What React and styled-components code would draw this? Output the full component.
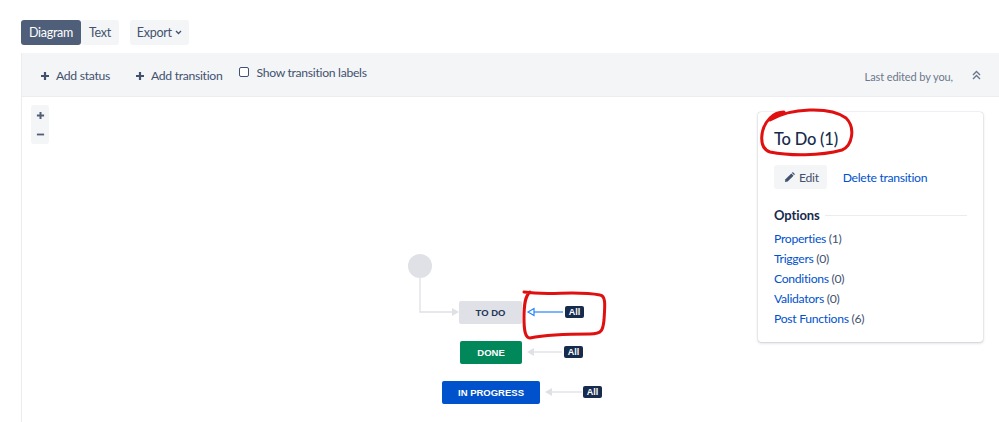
import React from "react";
import styled, {createGlobalStyle} from "styled-components";

const TEXT = "#172b4d";
const SUBTLE = "#42526e";
const LINK = "#0052cc";
const N20 = "#f4f5f7";
const N40 = "#dfe1e6";

const GlobalStyle = createGlobalStyle`
  html, body {
    margin: 0;
    padding: 0;
    background: #fff;
    font-family: Lato, "Noto Sans", sans-serif;
    color: ${TEXT};
    letter-spacing: -0.3px;
  }
  * { box-sizing: border-box; }
`;

const Page = styled.div`
  position: relative;
  width: 999px;
  height: 422px;
  overflow: hidden;
  padding: 20px 0 0 21px;
`;

const Tabs = styled.div`
  display: flex;
  align-items: center;
  height: 25px;
`;

const Tab = styled.div`
  height: 25px;
  padding: 0 ${p => (p.$menu ? 7 : 8)}px;
  display: flex;
  align-items: center;
  gap: 3px;
  font-size: 12.5px;
  letter-spacing: -0.3px;
  border-radius: 3px;
  margin-left: ${p => p.$gap || 0}px;
  background: ${p => (p.$active ? "#505f79" : N20)};
  color: ${p => (p.$active ? "#fff" : SUBTLE)};
`;

const Workspace = styled.div`
  margin-top: 8px;
  border-left: 1px solid #ebecf0;
`;

const Toolbar = styled.div`
  height: 44px;
  background: ${N20};
  border-bottom: 1px solid #ebecf0;
  display: flex;
  align-items: center;
  padding: 0 18px 0 18px;
  font-size: 12.2px;
  color: ${SUBTLE};
`;

const ToolButton = styled.div`
  display: flex;
  align-items: center;
  gap: 6px;
  margin-right: ${p => p.$mr || 0}px;
  padding-top: 2px;
`;

const CheckLabel = styled.label`
  display: flex;
  align-items: center;
  gap: 7px;
  margin-top: -5px;
`;

const Box = styled.span`
  width: 10px;
  height: 10px;
  border: 1px solid #42526e;
  border-radius: 2px;
  background: #fff;
`;

const Spacer = styled.div`
  flex: 1;
`;

const LastEdited = styled.div`
  font-size: 11px;
  letter-spacing: -0.1px;
  color: #6b778c;
  margin-right: 19px;
  padding-top: 4px;
`;

const Canvas = styled.div`
  position: relative;
  height: 325px;
  background: #fff;
`;

const Zoom = styled.div`
  position: absolute;
  left: 9px;
  top: 8px;
  width: 18px;
  height: 39px;
  padding-top: 1px;
  background: ${N20};
  border-radius: 3px;
  display: flex;
  flex-direction: column;
`;

const ZoomButton = styled.div`
  height: 19px;
  display: flex;
  align-items: center;
  justify-content: center;
`;

const Start = styled.div`
  position: absolute;
  left: 386px;
  top: 157px;
  width: 24px;
  height: 24px;
  border-radius: 50%;
  background: ${N40};
`;

const Status = styled.div`
  position: absolute;
  left: ${p => p.$x}px;
  top: ${p => p.$y}px;
  width: ${p => p.$w}px;
  height: 23px;
  border-radius: 2px;
  background: ${p => p.$bg};
  color: ${p => p.$fg};
  font-family: "Liberation Sans", Arial, sans-serif;
  font-size: 9.5px;
  font-weight: 700;
  letter-spacing: 0;
  display: flex;
  align-items: center;
  justify-content: center;
`;

const AllTag = styled.div`
  position: absolute;
  left: ${p => p.$x}px;
  top: ${p => p.$y}px;
  width: 19px;
  height: 12px;
  border-radius: 2px;
  background: #172b4d;
  color: #fff;
  font-family: "Liberation Sans", Arial, sans-serif;
  font-size: 9px;
  font-weight: 700;
  letter-spacing: 0;
  display: flex;
  align-items: center;
  justify-content: center;
`;

const Lines = styled.svg`
  position: absolute;
  left: 0;
  top: 0;
  width: 977px;
  height: 325px;
  pointer-events: none;
`;

const Panel = styled.div`
  position: absolute;
  left: 736px;
  top: 15px;
  width: 225px;
  height: 230px;
  background: #fff;
  border-radius: 3px;
  box-shadow: 0 0 1px rgba(9, 30, 66, 0.31), 0 1px 3px rgba(9, 30, 66, 0.2);
  padding: 15px 16px 0 16px;
`;

const Title = styled.div`
  font-size: 16.5px;
  font-weight: 500;
  letter-spacing: -0.2px;
  line-height: 24px;
  color: ${TEXT};
`;

const Actions = styled.div`
  margin-top: 14px;
  display: flex;
  align-items: center;
  gap: 16px;
  font-size: 12.2px;
`;

const EditButton = styled.div`
  height: 24px;
  padding: 0 8px 0 10px;
  display: flex;
  align-items: center;
  gap: 4px;
  background: ${N20};
  border-radius: 3px;
  color: ${SUBTLE};
`;

const Link = styled.span`
  color: ${LINK};
`;

const Heading = styled.div`
  margin-top: 16px;
  display: flex;
  align-items: center;
  gap: 5px;
  font-size: 13px;
  font-weight: 700;
  letter-spacing: -0.1px;
  line-height: 20px;
  &::after {
    content: "";
    flex: 1;
    height: 1px;
    background: #ebecf0;
  }
`;

const OptionList = styled.div`
  margin-top: 4px;
  display: flex;
  flex-direction: column;
  font-size: 12.2px;
  line-height: 20px;
  color: ${SUBTLE};
`;

const Annotations = styled.svg`
  position: absolute;
  left: 0;
  top: 0;
  width: 999px;
  height: 422px;
  pointer-events: none;
`;

const Plus = ({size = 10, color = "#42526e"}) => (
  <svg width={size} height={size} viewBox="0 0 10 10">
    <path d="M5 1v8M1 5h8" stroke={color} strokeWidth="2.2" />
  </svg>
);

const options = [
  ["Properties", 1],
  ["Triggers", 0],
  ["Conditions", 0],
  ["Validators", 0],
  ["Post Functions", 6],
];

export default function App() {
  return (
    <Page>
      <GlobalStyle />
      <Tabs>
        <Tab $active>Diagram</Tab>
        <Tab>Text</Tab>
        <Tab $gap={11} $menu>
          Export
          <svg width="7" height="5" viewBox="0 0 7 5">
            <path d="M1 1l2.5 2.5L6 1" fill="none" stroke="#42526e" strokeWidth="1.3" />
          </svg>
        </Tab>
      </Tabs>
      <Workspace>
        <Toolbar>
          <ToolButton $mr={25}><Plus />Add status</ToolButton>
          <ToolButton $mr={17}><Plus />Add transition</ToolButton>
          <CheckLabel><Box />Show transition labels</CheckLabel>
          <Spacer />
          <LastEdited>Last edited by you,</LastEdited>
          <svg width="9" height="10" viewBox="0 0 9 10">
            <path d="M1 5l3.5-3.5L8 5M1 9l3.5-3.5L8 9" fill="none" stroke="#6b778c" strokeWidth="1.4" />
          </svg>
        </Toolbar>
        <Canvas>
          <Zoom>
            <ZoomButton><Plus size={9} color="#505f79" /></ZoomButton>
            <ZoomButton>
              <svg width="9" height="9" viewBox="0 0 10 10">
                <path d="M1 5h8" stroke="#505f79" strokeWidth="2" />
              </svg>
            </ZoomButton>
          </Zoom>
          <Lines viewBox="0 0 977 325">
            <path d="M398 181V215H430" fill="none" stroke="#dfe1e6" strokeWidth="1.3" />
            <path d="M430 211l7 4-7 4z" fill="#dfe1e6" />
            <path d="M541 215H511" stroke="#2684ff" strokeWidth="1.2" />
            <path d="M506 215l6-3.5v7z" fill="#fff" stroke="#2684ff" strokeWidth="1.2" />
            <path d="M540 255H511" stroke="#dfe1e6" strokeWidth="1.3" />
            <path d="M505 255l7-4v8z" fill="#dfe1e6" />
            <path d="M560 295H530" stroke="#dfe1e6" strokeWidth="1.3" />
            <path d="M523 295l7-4v8z" fill="#dfe1e6" />
          </Lines>
          <Start />
          <Status $x={437} $y={204} $w={63} $bg={N40} $fg="#253858">TO DO</Status>
          <Status $x={438} $y={244} $w={62} $bg="#00875a" $fg="#fff">DONE</Status>
          <Status $x={420} $y={284} $w={98} $bg="#0052cc" $fg="#fff">IN PROGRESS</Status>
          <AllTag $x={543} $y={209}>All</AllTag>
          <AllTag $x={542} $y={249}>All</AllTag>
          <AllTag $x={561} $y={289}>All</AllTag>
          <Panel>
            <Title>To Do (1)</Title>
            <Actions>
              <EditButton>
                <svg width="11" height="11" viewBox="0 0 12 12">
                  <path d="M1 11l0.6-3 6.4-6.4 2.4 2.4L4 10.4z" fill="#42526e" />
                  <path d="M8.6 1l1-1 2.4 2.4-1 1z" fill="#42526e" />
                </svg>
                Edit
              </EditButton>
              <Link>Delete transition</Link>
            </Actions>
            <Heading>Options</Heading>
            <OptionList>
              {options.map(([name, n]) => (
                <div key={name}><Link>{name}</Link> ({n})</div>
              ))}
            </OptionList>
          </Panel>
        </Canvas>
      </Workspace>
      <Annotations viewBox="0 0 999 422">
        <path
          d="M770 120C790 108 830 106 846 118C856 128 852 146 842 150C820 156 790 156 770 152C758 148 760 128 770 118C774 114 780 112 784 112"
          fill="none" stroke="#e01010" strokeWidth="3" strokeLinecap="round" />
        <path
          d="M524 292C550 296 575 290 600 295C606 296 605 305 604 320C603 330 602 334 590 334C570 334 550 334 530 338C525 338 524 330 524 318C524 305 525 296 530 292"
          fill="none" stroke="#e01010" strokeWidth="3" strokeLinecap="round" />
      </Annotations>
    </Page>
  );
}
